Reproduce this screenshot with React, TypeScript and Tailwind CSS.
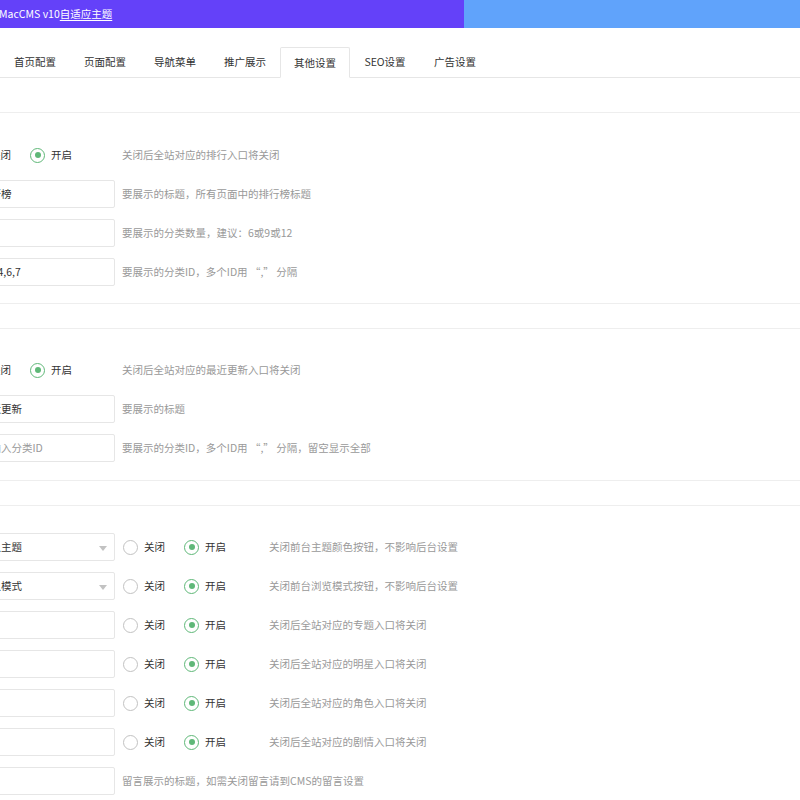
import React from "react";

const tabs = ["首页配置", "页面配置", "导航菜单", "推广展示", "其他设置", "SEO设置", "广告设置"];

function Radio({ checked, label }: { checked?: boolean; label: string }) {
  return (
    <div className="flex items-center gap-[6px] mr-[19px]">
      <span
        className={
          "w-[15px] h-[15px] rounded-full border flex items-center justify-center bg-white " +
          (checked ? "border-[#5FB878]" : "border-[#c2c2c2]")
        }
      >
        {checked && <span className="w-[6px] h-[6px] rounded-full bg-[#5FB878]" />}
      </span>
      <span className="text-[10.5px] text-[#333] leading-none">{label}</span>
    </div>
  );
}

function Desc({ children, className = "" }: { children: React.ReactNode; className?: string }) {
  return <div className={"text-[10.5px] text-[#999] leading-none whitespace-nowrap " + className}>{children}</div>;
}

function Input({ value, placeholder, select }: { value?: string; placeholder?: string; select?: boolean }) {
  return (
    <div className="relative w-[143px] h-[28px] border border-[#e6e6e6] rounded-[2px] bg-white flex items-center pl-[7px] shrink-0">
      <span className={"text-[10.5px] leading-none whitespace-nowrap " + (value ? "text-[#333]" : "text-[#999]")}>
        {value ?? placeholder ?? ""}
      </span>
      {select && (
        <span className="absolute right-[7px] top-[12px] w-0 h-0 border-l-[4.5px] border-r-[4.5px] border-t-[5px] border-l-transparent border-r-transparent border-t-[#c2c2c2]" />
      )}
    </div>
  );
}

function SwitchRow({ desc }: { desc: string }) {
  return (
    <div className="flex items-center h-[28px] pl-[129px]">
      <div className="w-[146px] flex items-center">
        <Radio label="关闭" />
        <Radio checked label="开启" />
      </div>
      <Desc className="ml-[7px]">{desc}</Desc>
    </div>
  );
}

function InputRow({ value, placeholder, desc }: { value?: string; placeholder?: string; desc: string }) {
  return (
    <div className="flex items-center h-[28px] pl-[132px]">
      <Input value={value} placeholder={placeholder} />
      <Desc className="ml-[7px]">{desc}</Desc>
    </div>
  );
}

function ComboRow({ value, select, desc }: { value?: string; select?: boolean; desc: string }) {
  return (
    <div className="flex items-center h-[28px] pl-[132px]">
      <Input value={value} select={select} />
      <div className="flex items-center ml-[8px]">
        <Radio label="关闭" />
        <Radio checked label="开启" />
      </div>
      <Desc className="ml-[24px]">{desc}</Desc>
    </div>
  );
}

function Fieldset({ children, pt, pb, className = "" }: { children: React.ReactNode; pt: string; pb: string; className?: string }) {
  return (
    <div className={"border-y border-[#eeeeee] flex flex-col gap-[11px] " + pt + " " + pb + " " + className}>{children}</div>
  );
}

export default function App() {
  return (
    <div className="w-[800px] h-[800px] overflow-hidden bg-white font-['Noto_Sans_CJK_SC',sans-serif]">
      <div className="w-[1100px] -ml-[160px]">
        {/* header */}
        <div className="flex h-[28px]">
          <div className="w-[624px] bg-[#6441f9] flex items-center pl-[159px]">
            <span className="text-white text-[10.5px] leading-none whitespace-nowrap">
              MacCMS v10<span className="underline underline-offset-2">自适应主题</span>
            </span>
          </div>
          <div className="flex-1 bg-[#60a3fb]" />
        </div>

        {/* tabs */}
        <div className="mt-[19px] pl-[160px] flex border-b border-[#e6e6e6] h-[31px]">
          {tabs.map((t) => (
            <div
              key={t}
              className={
                "w-[70px] h-[30px] flex items-center justify-center text-[10.5px] text-[#333] whitespace-nowrap " +
                (t === "其他设置" ? "h-[31px] border border-[#e6e6e6] border-b-white bg-white rounded-t-[2px]" : "")
              }
            >
              {t}
            </div>
          ))}
        </div>

        <div className="mt-[34px] flex flex-col">
          <Fieldset pt="pt-[28px]" pb="pb-[17px]">
            <SwitchRow desc="关闭后全站对应的排行入口将关闭" />
            <InputRow value="排行榜" desc="要展示的标题，所有页面中的排行榜标题" />
            <InputRow value="" desc="要展示的分类数量，建议：6或9或12" />
            <InputRow value="1,2,4,6,7" desc="要展示的分类ID，多个ID用 “,” 分隔" />
          </Fieldset>

          <Fieldset pt="pt-[27px]" pb="pb-[18px]" className="mt-[24px]">
            <SwitchRow desc="关闭后全站对应的最近更新入口将关闭" />
            <InputRow value="最近更新" desc="要展示的标题" />
            <InputRow placeholder="请输入分类ID" desc="要展示的分类ID，多个ID用 “,” 分隔，留空显示全部" />
          </Fieldset>

          <Fieldset pt="pt-[27px]" pb="pb-[18px]" className="mt-[24px]">
            <ComboRow value="默认主题" select desc="关闭前台主题颜色按钮，不影响后台设置" />
            <ComboRow value="默认模式" select desc="关闭前台浏览模式按钮，不影响后台设置" />
            <ComboRow desc="关闭后全站对应的专题入口将关闭" />
            <ComboRow desc="关闭后全站对应的明星入口将关闭" />
            <ComboRow desc="关闭后全站对应的角色入口将关闭" />
            <ComboRow desc="关闭后全站对应的剧情入口将关闭" />
            <InputRow value="" desc="留言展示的标题，如需关闭留言请到CMS的留言设置" />
          </Fieldset>
        </div>
      </div>
    </div>
  );
}
